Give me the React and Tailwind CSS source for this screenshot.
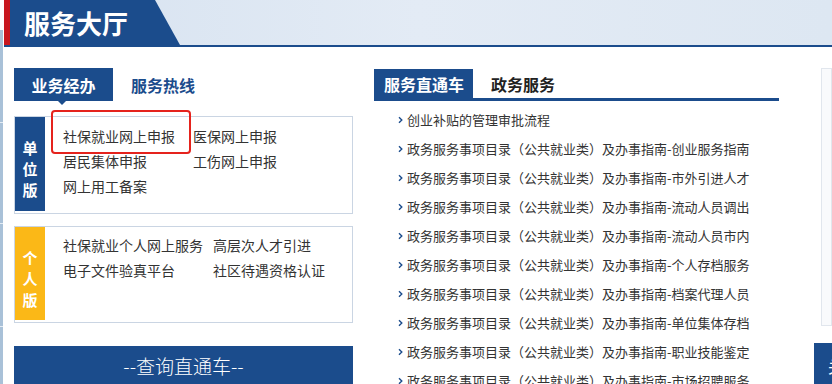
import React from "react";

const FONT = { fontFamily: '"Noto Sans CJK SC", "Microsoft YaHei", sans-serif' };

const Chevron = () => (
  <svg width="5" height="8" viewBox="0 0 5 8" className="shrink-0">
    <path d="M1 1.2L3.8 4L1 6.8" stroke="#1b4c8c" strokeWidth="1.4" fill="none" />
  </svg>
);

const P = "政务服务事项目录（公共就业类）及办事指南-";
const list = [
  "创业补贴的管理审批流程",
  P + "创业服务指南",
  P + "市外引进人才",
  P + "流动人员调出",
  P + "流动人员市内",
  P + "个人存档服务",
  P + "档案代理人员",
  P + "单位集体存档",
  P + "职业技能鉴定",
  P + "市场招聘服务",
];

function VLabel({ chars, bg }) {
  return (
    <div className={`w-[30px] ${bg} flex flex-col items-center justify-center pt-[9px] mb-[2px] shrink-0`}>
      {chars.map((c) => (
        <span key={c} className="text-white font-bold text-[15px] leading-[21px]">{c}</span>
      ))}
    </div>
  );
}

export default function App() {
  return (
    <div className="w-[832px] h-[384px] overflow-hidden bg-white flex text-[#333]" style={FONT}>
      {/* left thin strip */}
      <div className="w-[4px] shrink-0 flex flex-col pt-[30px]">
        <div className="w-[3px] h-[96px] bg-[#a9c1d8]" />
        <div className="w-[3px] h-[1px] bg-[#e4ecf4]" />
        <div className="w-[3px] h-[105px] bg-[#a9c1d8]" />
        <div className="w-[3px] h-[1px] bg-[#e4ecf4]" />
        <div className="w-[3px] h-[106px] bg-[#a9c1d8]" />
        <div className="w-[3px] h-[1px] bg-[#e4ecf4]" />
        <div className="w-[3px] h-[60px] bg-[#a9c1d8]" />
      </div>

      <div className="flex-1 flex flex-col min-w-0">
        {/* header */}
        <div className="h-[47px] flex shrink-0 border-b-2 border-[#1b4c8c] bg-gradient-to-r from-[#d6e2f0] via-[#e3ebf5] to-[#dde7f2]">
          <div className="w-[6px] bg-[#c8161e]" />
          <div className="w-[170px] bg-[#1b4c8c] [clip-path:polygon(0_0,145px_0,170px_100%,0_100%)] flex items-center pl-[14px]">
            <span className="text-white font-bold text-[26px] leading-none">服务大厅</span>
          </div>
        </div>

        {/* body */}
        <div className="flex pl-[10px] pt-[21px]">
          {/* left column */}
          <div className="w-[339px] shrink-0 flex flex-col">
            <div className="flex items-center h-[33px]">
              <div className="relative w-[99px] h-[33px] bg-[#1b4c8c] flex items-center justify-center">
                <span className="text-white font-bold text-[16px]">业务经办</span>
                <div className="absolute left-[44px] top-[33px] w-0 h-0 border-l-[4px] border-r-[4px] border-t-[4px] border-l-transparent border-r-transparent border-t-[#1b4c8c]" />
              </div>
              <span className="ml-[18px] text-[16px] font-bold text-[#1b4c8c]">服务热线</span>
            </div>

            {/* unit box */}
            <div className="relative mt-[15px] h-[98px] border border-[#cad5e3] flex">
              <VLabel chars={["单", "位", "版"]} bg="bg-[#1b4c8c]" />
              <div className="pl-[18px] pt-[7px] grid grid-cols-[130px_auto] content-start text-[14px] leading-[25px] text-[#333]">
                <span>社保就业网上申报</span>
                <span>医保网上申报</span>
                <span>居民集体申报</span>
                <span>工伤网上申报</span>
                <span>网上用工备案</span>
              </div>
              <div className="absolute left-[36px] top-[-7px] w-[140px] h-[44px] border-2 border-[#e5231d] rounded-[4px]" />
            </div>

            {/* personal box */}
            <div className="mt-[12px] h-[97px] border border-[#cad5e3] flex">
              <VLabel chars={["个", "人", "版"]} bg="bg-[#fbb817]" />
              <div className="pl-[18px] pt-[6px] grid grid-cols-[150px_auto] content-start text-[14px] leading-[25px] text-[#333]">
                <span>社保就业个人网上服务</span>
                <span>高层次人才引进</span>
                <span>电子文件验真平台</span>
                <span>社区待遇资格认证</span>
              </div>
            </div>

            {/* query bar */}
            <div className="mt-[23px] h-[40px] bg-[#1b4c8c] flex items-center justify-center">
              <span className="text-white text-[19px] font-light">--查询直通车--</span>
            </div>
          </div>

          {/* right column */}
          <div className="ml-[21px] w-[405px] shrink-0 flex flex-col">
            <div className="flex items-center h-[32px] border-b-[3px] border-[#1b4c8c] mt-[1px]">
              <div className="w-[99px] h-full bg-[#1b4c8c] flex items-center pl-[10px]">
                <span className="text-white font-bold text-[16px]">服务直通车</span>
              </div>
              <span className="ml-[18px] text-[16px] font-bold text-[#222]">政务服务</span>
            </div>
            <div className="mt-[4px] flex flex-col">
              {list.map((t, i) => (
                <div key={i} className="h-[29px] flex items-center pl-[24px] gap-[4px] overflow-hidden">
                  <Chevron />
                  <span className="text-[13px] whitespace-nowrap text-[#333]">{t}</span>
                </div>
              ))}
            </div>
          </div>

          {/* far right */}
          <div className="ml-[35px] flex-1 flex flex-col min-w-0">
            <div className="ml-[7px] h-[258px] border border-[#e1e6ed] bg-[#f9fafc]" />
            <div className="mt-[17px] h-[45px] bg-[#1b4c8c] flex items-center pl-[14px] overflow-hidden">
              <span className="text-white text-[16px] whitespace-nowrap">关注</span>
            </div>
          </div>
        </div>
      </div>
    </div>
  );
}
